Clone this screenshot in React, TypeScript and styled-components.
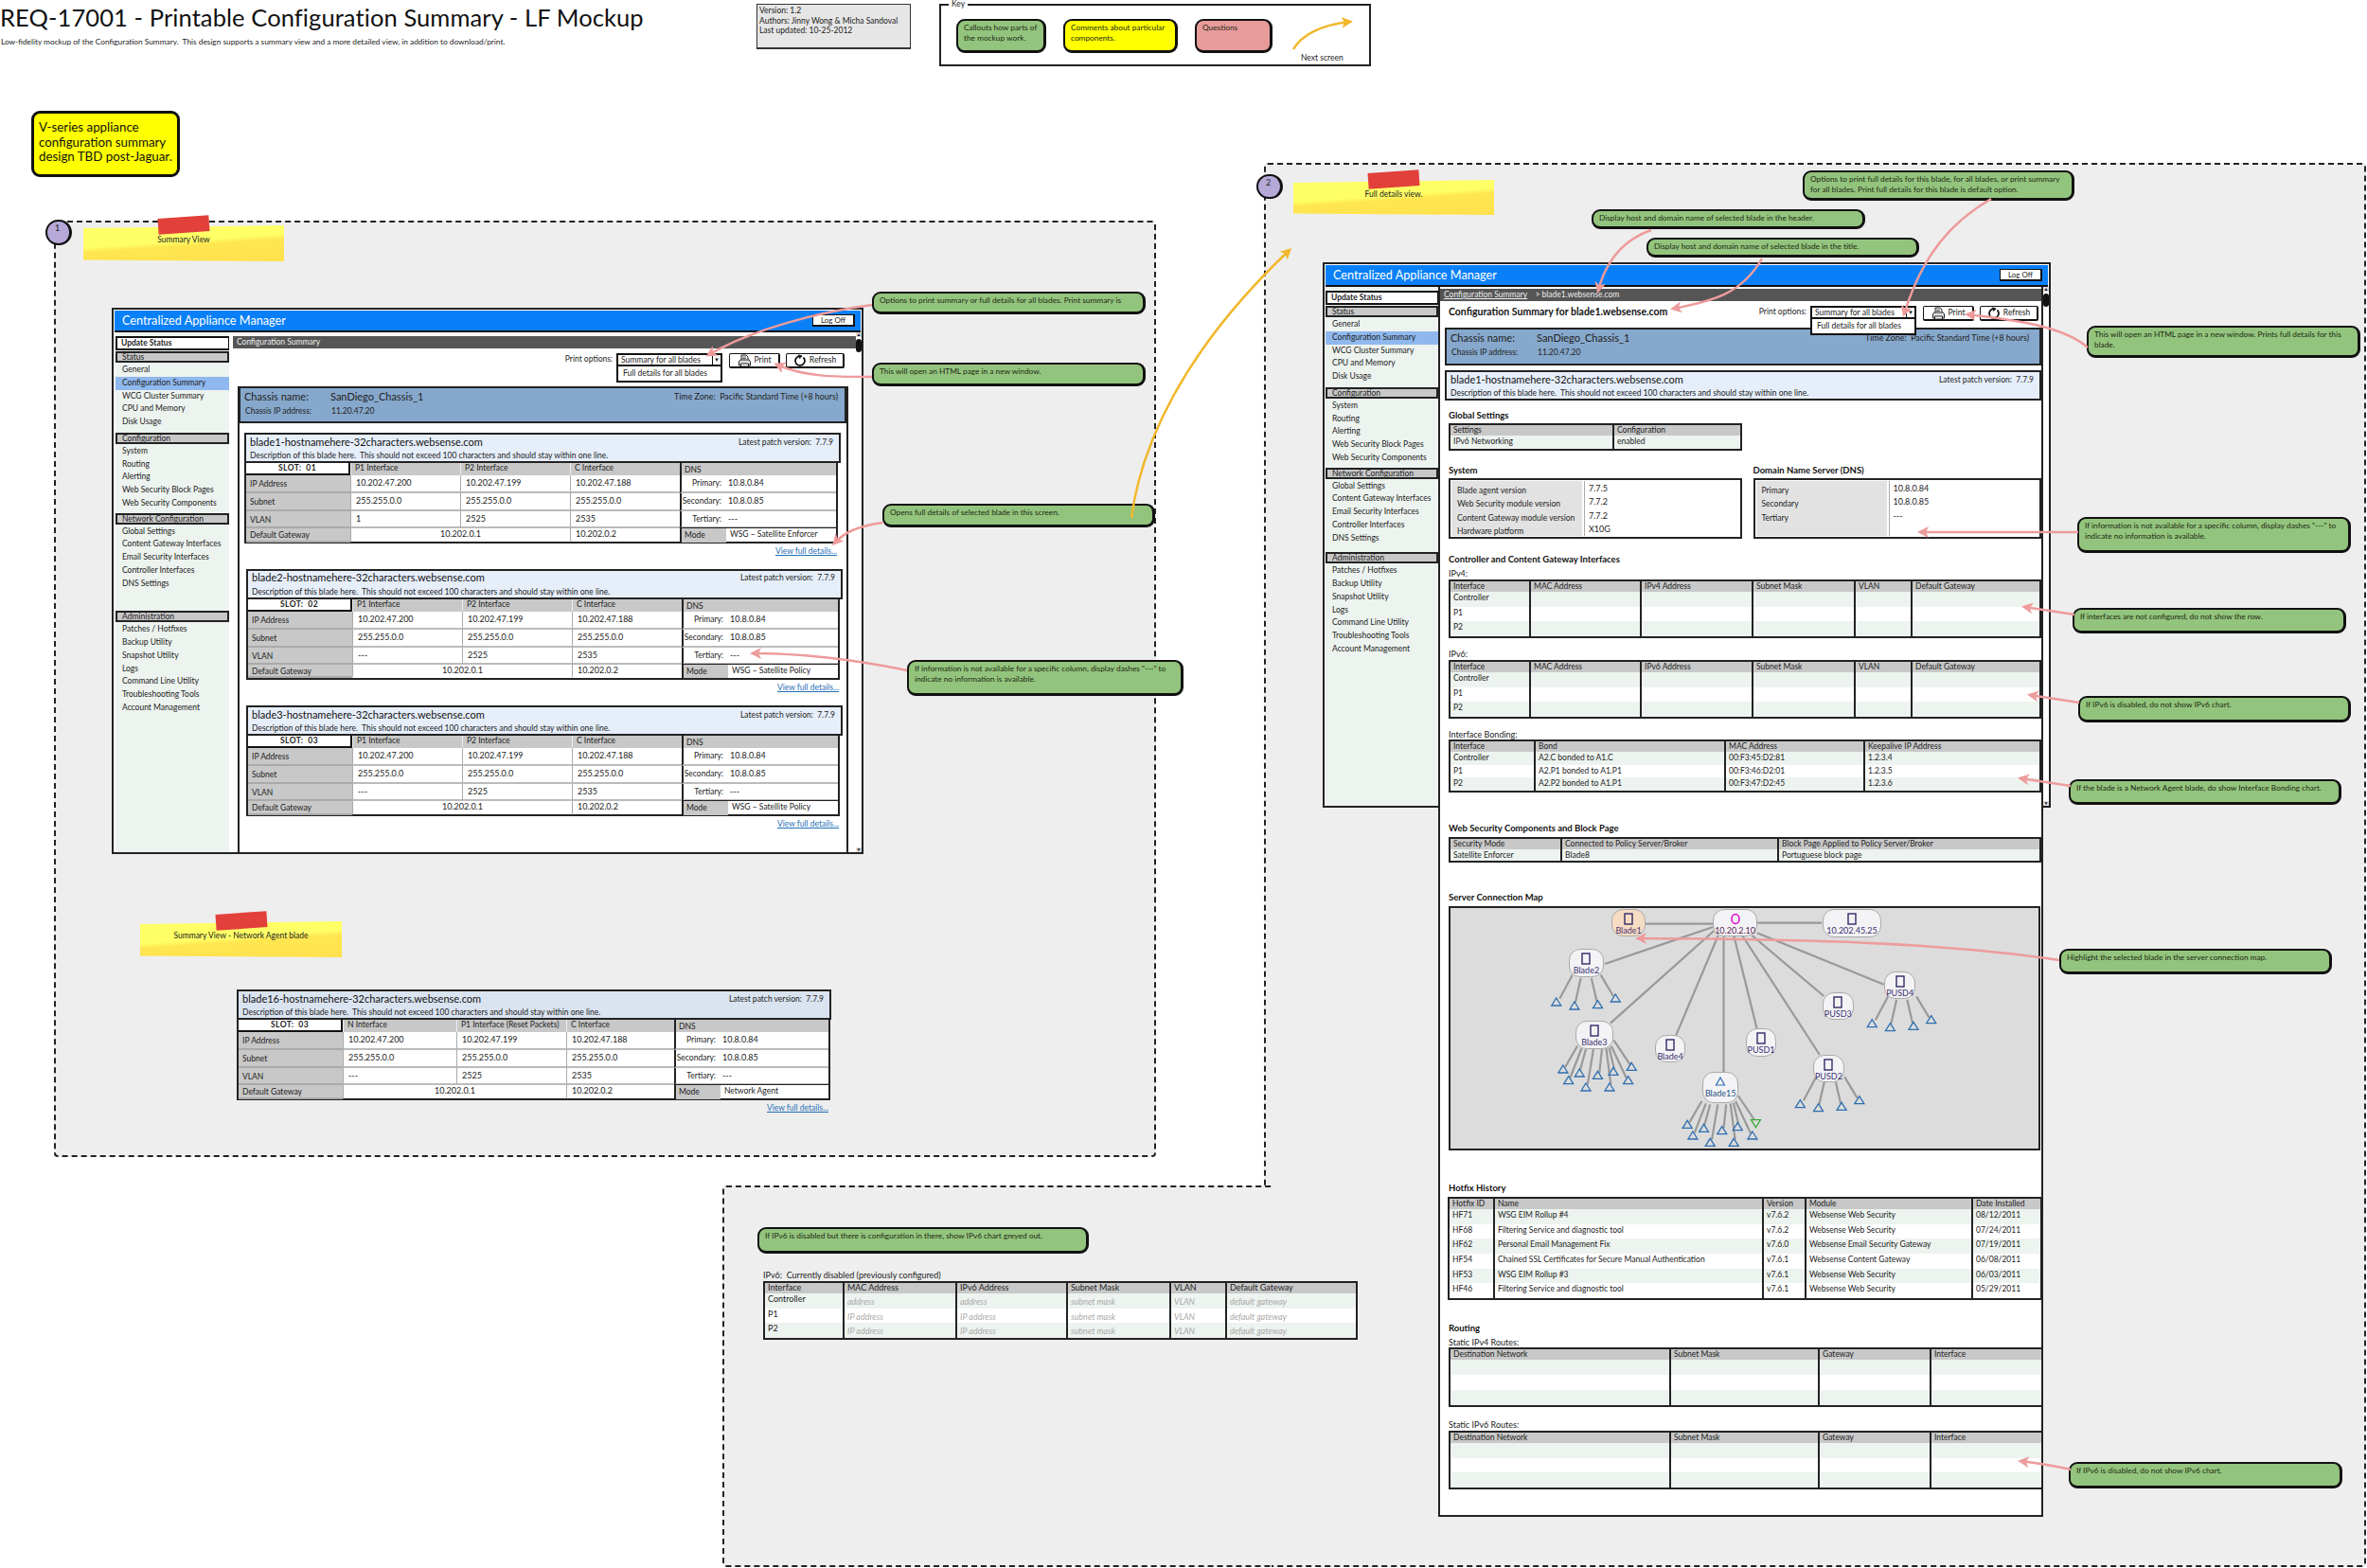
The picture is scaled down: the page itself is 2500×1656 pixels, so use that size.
import { Fragment } from 'react';
import styled, { createGlobalStyle, css } from 'styled-components';

const GlobalStyle = createGlobalStyle`
  html, body { margin: 0; padding: 0; background: #fff; }
  body {
    font-family: Lato, "Noto Sans", sans-serif;
    font-size: 8.5px;
    line-height: 10.5px;
    color: #222;
  }
  * { box-sizing: border-box; }
`;

interface PlaceProps { $x: number; $y: number; $w?: number; $h?: number }

const place = css<PlaceProps>`
  position: absolute;
  left: ${(p) => p.$x}px;
  top: ${(p) => p.$y}px;
  ${(p) => (p.$w ? `width: ${p.$w}px;` : '')}
  ${(p) => (p.$h ? `height: ${p.$h}px;` : '')}
`;

const Canvas = styled.div`
  position: relative;
  width: 2500px;
  height: 1656px;
  overflow: hidden;
  background: #fff;
`;

const PageTitle = styled.h1<PlaceProps>`
  ${place}
  margin: 0;
  font-size: 25.5px;
  letter-spacing: 0.09px;
  line-height: 30px;
  font-weight: 400;
  white-space: nowrap;
  color: #111;
`;

const PageSubtitle = styled.p<PlaceProps>`
  ${place}
  margin: 0;
  white-space: nowrap;
  font-size: 8.3px;
`;

const VersionBox = styled.div<PlaceProps>`
  ${place}
  background: #e6e6e6;
  border: 1.5px solid #333;
  border-bottom-width: 2px;
  padding: 1px 2px;
  font-size: 8.5px;
`;

const KeyBox = styled.div<PlaceProps>`
  ${place}
  border: 2px solid #222;
  background: #fff;
  display: flex;
  gap: 18px;
  padding: 14px 16px;
`;

const KeyLegend = styled.span`
  position: absolute;
  left: 8px;
  top: -7px;
  padding: 0 3px;
  background: #fff;
`;

const KeyArrow = styled.div`
  position: relative;
  flex: 1;
  margin-top: -2px;
  svg { display: block; }
  span { position: absolute; left: 12px; top: 38px; white-space: nowrap; }
`;

type Tone = 'green' | 'yellow' | 'pink';
const toneColor: Record<Tone, string> = { green: '#93c47d', yellow: '#ffff00', pink: '#e89b9b' };

const Note = styled.div<{ $tone?: Tone; $nw?: number; $nh?: number }>`
  background: ${(p) => toneColor[p.$tone ?? 'green']};
  border: 2px solid #111;
  border-right-width: 3px;
  border-bottom-width: 3px;
  border-radius: 9px;
  padding: 2px 4px 2px 6px;
  flex: none;
  color: #1c2a12;
  font-size: 8.3px;
  ${(p) => (p.$nw ? `width: ${p.$nw}px;` : '')}
  ${(p) => (p.$nh ? `height: ${p.$nh}px;` : '')}
`;

const Callout = styled(Note)<PlaceProps>`
  ${place}
`;

const BigNote = styled(Note)<PlaceProps>`
  ${place}
  font-size: 13.3px;
  line-height: 15.5px;
  padding: 7px 1px 7px 5px;
  border-width: 3px;
  color: #111;
`;

const Group = styled.div<PlaceProps & { $open?: boolean }>`
  ${place}
  background: #eee;
  border: 2px dashed #222;
  border-radius: 4px;
  ${(p) => (p.$open ? 'border-right: none; border-radius: 4px 0 0 4px;' : '')}
`;

const Badge = styled.div<PlaceProps>`
  ${place}
  background: #b6a9d8;
  border: 2px solid #111;
  border-right-width: 3px;
  border-radius: 14px;
  padding: 2px 0 0 8px;
  font-size: 9px;
`;

const Sticky = styled.div<PlaceProps>`
  ${place}
  padding-top: 10px;
  text-align: center;
  &::before {
    content: '';
    position: absolute;
    inset: 0;
    z-index: 0;
    background: linear-gradient(176deg, #ffff66 0 45%, #ffe650 55%, #ffe14d 100%);
    clip-path: polygon(0 8%, 100% 0, 100% 100%, 0 96%);
  }
  &::after {
    content: '';
    position: absolute;
    left: 50%;
    top: -9px;
    width: 54px;
    height: 17px;
    margin-left: -27px;
    background: #e2403a;
    transform: rotate(-4deg);
  }
  span { position: relative; z-index: 1; }
`;

const Window = styled.div<PlaceProps>`
  ${place}
  border: 2px solid #222;
  display: flex;
  flex-direction: column;
  background: #fff;
`;

const WindowHeader = styled.header`
  flex: none;
  height: 23px;
  margin: 1px 1px 0;
  background: #0a80f8;
  border-bottom: 2px solid #111;
  display: flex;
  align-items: center;
  justify-content: space-between;
  padding: 0 6px 0 8px;
  color: #fff;
  font-size: 12.7px;
`;

const LogOff = styled.div`
  width: 45px;
  height: 13px;
  background: #fff;
  color: #222;
  border: 1px solid #111;
  border-right-width: 2px;
  border-bottom-width: 2px;
  font-size: 8px;
  line-height: 10px;
  text-align: center;
`;

const WindowBody = styled.div`
  flex: 1;
  min-height: 0;
  display: flex;
`;

const Sidebar = styled.nav<{ $w: number; $ml: number }>`
  flex: none;
  width: ${(p) => p.$w}px;
  margin-left: ${(p) => p.$ml}px;
  padding-top: 4px;
  background: #edf3ef;
`;

const UpdateStatus = styled.div`
  height: 15px;
  background: #fff;
  border: 2px solid #111;
  border-right-width: 1px;
  padding-left: 4px;
  font-weight: 700;
  line-height: 11px;
`;

const SideHead = styled.div<{ $gap: number }>`
  height: 12px;
  margin: ${(p) => p.$gap}px 0 1px;
  background: #c8c8c8;
  border: 2px solid #222;
  padding-left: 5px;
  line-height: 8px;
`;

const SideItem = styled.div<{ $active?: boolean }>`
  height: 13.75px;
  line-height: 13.75px;
  padding-left: 7px;
  white-space: nowrap;
  ${(p) => (p.$active ? 'background: #8fb8ee;' : '')}
`;

const ScrollTrack = styled.div`
  flex: none;
  width: 6px;
  display: flex;
  flex-direction: column;
  justify-content: space-between;
  background: #fff;
`;

const ScrollButton = styled.div`
  height: 5px;
  font-size: 5px;
  line-height: 5px;
  text-align: center;
  color: #111;
  background: #ddd;
`;

const ScrollThumb = styled.div`
  width: 6px;
  height: 14px;
  margin-top: 2px;
  border-radius: 3px;
  background: #111;
`;

const ScrollTop = styled.div``;

const SummaryMain = styled.main`
  flex: none;
  width: 662px;
  display: flex;
  flex-direction: column;
`;

const DetailMain = styled.main`
  flex: none;
  width: 639px;
  height: 1299px;
  position: relative;
  z-index: 1;
  background: #fff;
  border: 2px solid #222;
  border-top: none;
`;

const TitleBar = styled.div<{ $ml: number; $mt: number }>`
  height: 13px;
  margin: ${(p) => p.$mt}px 0 0 ${(p) => p.$ml}px;
  padding-left: 4px;
  background: #555;
  color: #eee;
  line-height: 12px;
  white-space: nowrap;
  u { margin-right: 6px; }
`;

const Toolbar = styled.div<{ $h: number; $pr: number }>`
  height: ${(p) => p.$h}px;
  padding: 5px ${(p) => p.$pr}px 0 9px;
  display: flex;
  align-items: flex-start;
  justify-content: flex-end;
  white-space: nowrap;
`;

const PageHeading = styled.h2`
  flex: 1;
  margin: 0;
  font-size: 10.5px;
  line-height: 12px;
  font-weight: 700;
  color: #111;
`;

const PrintLabel = styled.span`
  margin: 1px 4px 0 0;
`;

const Combo = styled.div`
  position: relative;
  width: 112px;
  height: 14px;
  margin-right: 1px;
  background: #fff;
  border: 2px solid #111;
  padding-left: 3px;
  line-height: 10px;
  display: flex;
  justify-content: space-between;
`;

const ComboArrow = styled.span`
  width: 9px;
  border-left: 1px solid #111;
  font-size: 6px;
  text-align: center;
`;

const ComboList = styled.div`
  position: absolute;
  z-index: 2;
  left: -2px;
  right: -2px;
  top: 10px;
  height: 19px;
  padding: 2px 5px;
  background: #fff;
  border: 2px solid #111;
`;

const ToolButton = styled.div<{ $w: number }>`
  width: ${(p) => p.$w}px;
  height: 16px;
  margin-left: 6px;
  background: #fff;
  border: 1.5px solid #111;
  border-right-width: 2.5px;
  border-bottom-width: 2.5px;
  border-radius: 2px;
  display: flex;
  align-items: center;
  justify-content: center;
  gap: 3px;
`;

const SummaryPanel = styled.div`
  flex: 1;
  width: 645px;
  margin-left: 9px;
  border: solid #222;
  border-width: 0 2px;
`;

const ChassisBar = styled.div<{ $h: number; $ml: number; $pr: number }>`
  height: ${(p) => p.$h}px;
  margin-left: ${(p) => p.$ml}px;
  background: #86a8cc;
  border: 2px solid #222;
  display: grid;
  grid-template-columns: 91px 1fr auto;
  grid-template-rows: 16px 14px;
  padding: 1px ${(p) => p.$pr}px 0 4px;
  align-items: center;
  white-space: nowrap;
  font-size: 8.9px;
`;

const ChassisBig = styled.span`
  font-size: 11px;
`;

const ChassisSmall = styled.span`
  font-size: 8.5px;
  padding-left: 1px;
`;

const BladeBlock = styled.section<{ $ml: number; $mt: number }>`
  width: 630px;
  margin: ${(p) => p.$mt}px 0 0 ${(p) => p.$ml}px;
`;

const FreeBlade = styled.section<PlaceProps>`
  ${place}
`;

const BladeHead = styled.div<{ $bg?: string; $mt?: number; $ml?: number }>`
  height: 32px;
  margin: ${(p) => p.$mt ?? 0}px 0 0 ${(p) => p.$ml ?? 0}px;
  background: ${(p) => p.$bg ?? '#e6eefa'};
  border: 2px solid #222;
  padding: 1px 6px 0 4px;
`;

const BladeHeadTop = styled.div`
  display: flex;
  justify-content: space-between;
  align-items: center;
  height: 14px;
  margin-bottom: 2px;
  font-size: 8.5px;
  strong { font-size: 11px; font-weight: 400; color: #111; }
`;

const BladeGrid = styled.div<{ $cols: string }>`
  height: 85px;
  width: 627px;
  background: #fff;
  border: 2px solid #222;
  border-top: none;
  display: grid;
  grid-template-columns: ${(p) => p.$cols};
  grid-template-rows: 13px 19px 19px 18px 1fr;
`;

const SlotCell = styled.div`
  background: #fff;
  border: solid #111;
  border-width: 0 2px 2px 0;
  text-align: center;
  font-weight: 700;
  letter-spacing: 0.4px;
  line-height: 11px;
`;

const BladeHeadCell = styled.div`
  background: #c8c8c8;
  padding-left: 4px;
  white-space: nowrap;
  border-left: 1px solid #eee;
`;

const RowLabel = styled.div<{ $last?: boolean }>`
  background: #c8c8c8;
  border-bottom: 2px solid #aaa;
  padding: ${(p) => (p.$last ? 2 : 4)}px 0 0 4px;
`;

const RowValue = styled.div<{ $span?: number; $center?: boolean; $last?: boolean }>`
  padding: ${(p) => (p.$last ? 1 : 3)}px 0 0 5px;
  border-bottom: 2px solid ${(p) => (p.$last ? 'transparent' : '#bbb')};
  border-left: 1px solid #aaa;
  font-size: 9px;
  ${(p) => (p.$span ? `grid-column: span ${p.$span};` : '')}
  ${(p) => (p.$center ? 'text-align: center; padding-left: 0;' : '')}
`;

const DnsHead = styled.div`
  background: #c8c8c8;
  border-left: 2px solid #222;
  padding: 2px 0 0 3px;
`;

const DnsRow = styled.div`
  display: grid;
  grid-template-columns: 42px 1fr;
  column-gap: 7px;
  padding-top: 3px;
  border-left: 2px solid #222;
  border-bottom: 2px solid #bbb;
  span:first-child { text-align: right; }
  span:last-child { font-size: 9px; }
`;

const ModeRow = styled.div`
  display: flex;
  border-left: 2px solid #222;
  border-top: 1px solid #222;
  margin-top: -1px;
  b { width: 47px; background: #c8c8c8; font-weight: 400; padding: 2px 0 0 3px; }
  span { padding: 1px 0 0 4px; }
`;

const DetailsLink = styled.a<{ $w: number }>`
  display: block;
  width: ${(p) => p.$w}px;
  margin-top: 3px;
  text-align: right;
  color: #1f6fb5;
  text-decoration: underline;
`;

const SectionTitle = styled.h3<{ $mt: number; $ml?: number }>`
  margin: ${(p) => p.$mt}px 0 0 ${(p) => p.$ml ?? 9}px;
  height: 14px;
  font-size: 9.5px;
  line-height: 17px;
  font-weight: 700;
  color: #111;
`;

const TableLabel = styled.div<{ $mt: number }>`
  margin: ${(p) => p.$mt}px 0 0 9px;
  height: 12px;
  font-size: 9px;
  line-height: 14px;
`;

const TableGrid = styled.div<{ $cols: string; $w: number; $h: number; $mt: number; $ml?: number }>`
  width: ${(p) => p.$w}px;
  height: ${(p) => p.$h}px;
  margin: ${(p) => p.$mt}px 0 0 ${(p) => p.$ml ?? 9}px;
  border: 2px solid #222;
  background: #fff;
  display: grid;
  grid-template-columns: ${(p) => p.$cols};
  grid-template-rows: 11px;
  grid-auto-rows: 1fr;
`;

const FreeTableWrap = styled.div<PlaceProps>`
  ${place}
  font-size: 9px;
`;

const THead = styled.div<{ $first?: boolean }>`
  background: #c8c8c8;
  padding-left: 3px;
  white-space: nowrap;
  line-height: 10px;
  ${(p) => (p.$first ? '' : 'border-left: 2px solid #222;')}
`;

const TCell = styled.div<{ $first?: boolean; $odd?: boolean; $muted?: boolean }>`
  background: ${(p) => (p.$odd ? '#fff' : '#edf3ef')};
  padding: 1px 0 0 3px;
  white-space: nowrap;
  ${(p) => (p.$first ? '' : 'border-left: 2px solid #222;')}
  ${(p) => (p.$muted ? 'color: #aaa; font-style: italic; padding-top: 4px;' : '')}
`;

const InfoRow = styled.div`
  display: flex;
  margin-left: 9px;
  gap: 12px;
`;

const InfoColumn = styled.div<{ $w: number }>`
  width: ${(p) => p.$w}px;
  h3 { margin: 13px 0 2px; height: 14px; font-size: 9.5px; line-height: 15px; font-weight: 700; color: #111; }
`;

const InfoBox = styled.div`
  height: 64px;
  display: flex;
  border: 2px solid #222;
  padding: 1px;
  background: #fff;
`;

const InfoLabels = styled.div`
  width: 138px;
  height: 58px;
  margin-right: 2px;
  background: #e2e2e2;
  padding: 3px 0 0 6px;
  div { height: 14.3px; line-height: 14.3px; }
`;

const InfoValues = styled.div`
  border-left: 1px solid #aaa;
  padding: 1px 0 0 4px;
  height: 58px;
  font-size: 9px;
  div { height: 14.3px; line-height: 14.3px; }
`;

const MapBox = styled.div`
  position: relative;
  width: 625px;
  height: 258px;
  margin: 4px 0 0 9px;
  background: #dcdcdc;
  border: 2px solid #222;
`;

const MapLines = styled.svg`
  position: absolute;
  inset: 0;
`;

const NodeIcon = styled.svg`
  flex: none;
`;

const MapNode = styled.div<PlaceProps & { $on?: boolean; $ink: string }>`
  ${place}
  z-index: 1;
  display: flex;
  flex-direction: column;
  align-items: center;
  padding-top: 3px;
  background: ${(p) => (p.$on ? '#f7dcc4' : '#f3f3f6')};
  border: 1.5px solid #aaa;
  border-radius: 12px;
  color: ${(p) => p.$ink};
  font-size: 9px;
  line-height: 11px;
  white-space: nowrap;
`;

const ArrowLayer = styled.svg`
  position: absolute;
  inset: 0;
  z-index: 5;
  pointer-events: none;
`;

const sideSections = [
  { title: 'Status', gap: 1, items: ['General', 'Configuration Summary', 'WCG Cluster Summary', 'CPU and Memory', 'Disk Usage'] },
  { title: 'Configuration', gap: 4, items: ['System', 'Routing', 'Alerting', 'Web Security Block Pages', 'Web Security Components'] },
  { title: 'Network Configuration', gap: 3, items: ['Global Settings', 'Content Gateway Interfaces', 'Email Security Interfaces', 'Controller Interfaces', 'DNS Settings'] },
  { title: 'Administration', gap: 0, items: ['Patches / Hotfixes', 'Backup Utility', 'Snapshot Utility', 'Logs', 'Command Line Utility', 'Troubleshooting Tools', 'Account Management'] },
];

const SideNav = ({ width, left, adminGap }: { width: number; left: number; adminGap: number }) => (
  <Sidebar $w={width} $ml={left}>
    <UpdateStatus>Update Status</UpdateStatus>
    {sideSections.map((s) => (
      <Fragment key={s.title}>
        <SideHead $gap={s.title === 'Administration' ? adminGap : s.gap}>{s.title}</SideHead>
        {s.items.map((item) => (
          <SideItem key={item} $active={item === 'Configuration Summary'}>{item}</SideItem>
        ))}
      </Fragment>
    ))}
  </Sidebar>
);

const ScrollBar = () => (
  <ScrollTrack>
    <ScrollTop>
      <ScrollButton>▲</ScrollButton>
      <ScrollThumb />
    </ScrollTop>
    <ScrollButton>▼</ScrollButton>
  </ScrollTrack>
);

const PrinterIcon = () => (
  <svg width="15" height="14" viewBox="0 0 15 14" fill="none" stroke="#222" strokeWidth="1">
    <path d="M4 6V1h5l2 2v3" fill="#fff" />
    <path d="M1.5 12V7.5L3 6h9l1.5 1.5V12z" fill="#ddd" />
    <path d="M3.5 10h8v3h-8z" fill="#fff" />
    <path d="M5 3h4M5 4.5h4" strokeWidth="0.7" />
  </svg>
);

const RefreshIcon = () => (
  <svg width="14" height="14" viewBox="0 0 14 14" fill="none" stroke="#111" strokeWidth="1.8">
    <path d="M8.5 2.2A5 5 0 1 0 12 7a5 5 0 0 0-1.5-3.5" />
    <path d="M5.5 0.8l3.6 1.4-2.6 2.6z" fill="#111" strokeWidth="0.6" />
  </svg>
);

const PrintControls = () => (
  <>
    <PrintLabel>Print options:</PrintLabel>
    <Combo>
      Summary for all blades
      <ComboArrow>▼</ComboArrow>
      <ComboList>Full details for all blades</ComboList>
    </Combo>
    <ToolButton $w={54}><PrinterIcon />Print</ToolButton>
    <ToolButton $w={62}><RefreshIcon />Refresh</ToolButton>
  </>
);

const Chassis = ({ height, left, right }: { height: number; left: number; right: number }) => (
  <ChassisBar $h={height} $ml={left} $pr={right}>
    <ChassisBig>Chassis name:</ChassisBig>
    <ChassisBig>SanDiego_Chassis_1</ChassisBig>
    <span>Time Zone:&nbsp;&nbsp;Pacific Standard Time (+8 hours)</span>
    <ChassisSmall>Chassis IP address:</ChassisSmall>
    <ChassisSmall>11.20.47.20</ChassisSmall>
  </ChassisBar>
);

const BladeHeading = ({ name, bg, top, left }: { name: string; bg?: string; top?: number; left?: number }) => (
  <BladeHead $bg={bg} $mt={top} $ml={left}>
    <BladeHeadTop>
      <strong>{name}-hostnamehere-32characters.websense.com</strong>
      <span>Latest patch version:&nbsp;&nbsp;7.7.9</span>
    </BladeHeadTop>
    <div>Description of this blade here.&nbsp; This should not exceed 100 characters and should stay within one line.</div>
  </BladeHead>
);

interface BladeTableProps {
  slot: string;
  vlan: string;
  mode: string;
  heads: string[];
  cols: string;
}

const BladeTable = ({ slot, vlan, mode, heads, cols }: BladeTableProps) => (
  <BladeGrid $cols={cols}>
    <SlotCell>SLOT:&nbsp;&nbsp;{slot}</SlotCell>
    {heads.map((h) => <BladeHeadCell key={h}>{h}</BladeHeadCell>)}
    <DnsHead>DNS</DnsHead>

    <RowLabel>IP Address</RowLabel>
    <RowValue>10.202.47.200</RowValue>
    <RowValue>10.202.47.199</RowValue>
    <RowValue>10.202.47.188</RowValue>
    <DnsRow><span>Primary:</span><span>10.8.0.84</span></DnsRow>

    <RowLabel>Subnet</RowLabel>
    <RowValue>255.255.0.0</RowValue>
    <RowValue>255.255.0.0</RowValue>
    <RowValue>255.255.0.0</RowValue>
    <DnsRow><span>Secondary:</span><span>10.8.0.85</span></DnsRow>

    <RowLabel>VLAN</RowLabel>
    <RowValue>{vlan}</RowValue>
    <RowValue>2525</RowValue>
    <RowValue>2535</RowValue>
    <DnsRow><span>Tertiary:</span><span>---</span></DnsRow>

    <RowLabel $last>Default Gateway</RowLabel>
    <RowValue $span={2} $center $last>10.202.0.1</RowValue>
    <RowValue $last>10.202.0.2</RowValue>
    <ModeRow><b>Mode</b><span>{mode}</span></ModeRow>
  </BladeGrid>
);

const interfaceHeads = ['P1 Interface', 'P2 Interface', 'C Interface'];
const bladeCols = '110px 116px 116px 116px 1fr';

const blades = [
  { name: 'blade1', slot: '01', vlan: '1', mode: 'WSG – Satellite Enforcer', ml: 5, mt: 10, w: 626 },
  { name: 'blade2', slot: '02', vlan: '---', mode: 'WSG – Satellite Policy', ml: 7, mt: 13, w: 626 },
  { name: 'blade3', slot: '03', vlan: '---', mode: 'WSG – Satellite Policy', ml: 7, mt: 14, w: 626 },
];

interface TableProps {
  cols: string;
  w: number;
  h: number;
  mt: number;
  ml?: number;
  heads: string[];
  rows: string[][];
  muted?: boolean;
}

const DataTable = ({ cols, w, h, mt, ml, heads, rows, muted }: TableProps) => (
  <TableGrid $cols={cols} $w={w} $h={h} $mt={mt} $ml={ml}>
    {heads.map((head, i) => <THead key={head} $first={i === 0}>{head}</THead>)}
    {rows.map((row, r) =>
      row.map((cell, c) => (
        <TCell key={`${r}-${c}`} $first={c === 0} $odd={r % 2 === 1} $muted={muted && c > 0}>
          {cell}
        </TCell>
      ))
    )}
  </TableGrid>
);

const emptyRow = (first: string) => [first, '', '', '', '', ''];
const ifaceCols = '83px 117px 118px 108px 60px 1fr';
const routeCols = '231px 157px 118px 1fr';
const emptyRoutes = [['', '', '', ''], ['', '', '', ''], ['', '', '', '']];

// map coordinates were read from a crop, so convert them to the box's own pixels
const mx = (z: number) => z / 2.24 - 32;
const my = (z: number) => z / 3 - 31;

const mapNodes = [
  { label: 'Blade1', x: 453, y: 97, w: 80, h: 86, ink: '#4a3570', glyph: 'rect', on: true },
  { label: '10.20.2.10', x: 693, y: 97, w: 104, h: 86, ink: '#5e1f55', glyph: 'hub' },
  { label: '10.202.45.25', x: 953, y: 97, w: 137, h: 88, ink: '#3b3070', glyph: 'rect' },
  { label: 'Blade2', x: 352, y: 223, w: 82, h: 90, ink: '#3b3070', glyph: 'rect' },
  { label: 'Blade3', x: 367, y: 450, w: 90, h: 90, ink: '#3b3070', glyph: 'rect' },
  { label: 'Blade4', x: 555, y: 495, w: 73, h: 88, ink: '#3b3070', glyph: 'rect' },
  { label: 'PUSD1', x: 770, y: 475, w: 73, h: 88, ink: '#3b3070', glyph: 'rect' },
  { label: 'Blade15', x: 668, y: 613, w: 85, h: 97, ink: '#24507e', glyph: 'tri' },
  { label: 'PUSD2', x: 930, y: 557, w: 73, h: 88, ink: '#3b3070', glyph: 'rect' },
  { label: 'PUSD3', x: 952, y: 360, w: 73, h: 88, ink: '#3b3070', glyph: 'rect' },
  { label: 'PUSD4', x: 1098, y: 293, w: 74, h: 87, ink: '#3b3070', glyph: 'rect' },
];

const hubLines = [
  [533, 143, 693, 143], [797, 140, 950, 140], [693, 153, 437, 270], [695, 165, 450, 458],
  [705, 180, 605, 497], [718, 180, 718, 613], [742, 180, 797, 478], [762, 180, 945, 558],
  [785, 180, 955, 372], [797, 172, 1097, 335],
];

const fan4 = [
  [360, 305, 330, 380, 322, 393], [380, 315, 367, 392, 365, 405],
  [405, 315, 418, 390, 420, 401], [427, 305, 457, 372, 462, 381],
];
const fan9 = [
  [372, 530, 343, 597, 338, 606], [382, 537, 355, 630, 351, 641], [392, 540, 378, 608, 377, 618],
  [410, 540, 396, 652, 392, 663], [430, 540, 424, 615, 420, 625], [440, 537, 451, 652, 448, 663],
  [447, 535, 459, 603, 457, 613], [452, 530, 488, 632, 492, 641], [458, 512, 497, 590, 500, 598],
];

const fans = [
  { dx: 0, dy: 0, fan: fan4 },
  { dx: 577, dy: 323, fan: fan4 },
  { dx: 747, dy: 68, fan: fan4 },
  { dx: 0, dy: 0, fan: fan9 },
  { dx: 294, dy: 175, fan: fan9, green: 500 },
];

const triangle = (x: number, y: number, flip = false) => {
  const s = flip ? -1 : 1;
  return `${x},${y - 5 * s} ${x + 5},${y + 3 * s} ${x - 5},${y + 3 * s}`;
};

const NodeGlyph = ({ kind }: { kind: string }) => (
  <NodeIcon width="12" height="13" viewBox="0 0 12 13" fill="none">
    {kind === 'rect' && <rect x="2" y="1" width="8" height="11" stroke="#2f2a66" strokeWidth="1.4" />}
    {kind === 'hub' && <ellipse cx="6" cy="6.5" rx="4" ry="5" stroke="#e000d0" strokeWidth="1.5" />}
    {kind === 'tri' && <polygon points="6,2 10.5,10 1.5,10" stroke="#2e6fb0" strokeWidth="1.2" />}
  </NodeIcon>
);

const ConnectionMap = () => (
  <MapBox>
    <MapLines width="621" height="254">
      <g stroke="#999" strokeWidth="2.2">
        {hubLines.map(([a, b, c, d]) => (
          <line key={`${a}-${b}-${c}`} x1={mx(a)} y1={my(b)} x2={mx(c)} y2={my(d)} />
        ))}
        {fans.flatMap(({ dx, dy, fan }) =>
          fan.map(([a, b, c, d]) => (
            <line
              key={`${dx}-${a}-${c}`}
              x1={mx(a + dx)}
              y1={my(b + dy)}
              x2={mx(c + dx)}
              y2={my(d + dy)}
            />
          ))
        )}
      </g>
      <g fill="#dcdcdc" stroke="#2e6fb0" strokeWidth="1.3">
        {fans.flatMap(({ dx, dy, fan, green }) =>
          fan
            .filter(([, , , , e]) => e !== green)
            .map(([, , , , e, f]) => (
              <polygon key={`${dx}-${e}-${f}`} points={triangle(mx(e + dx), my(f + dy))} />
            ))
        )}
      </g>
      <polygon points={triangle(mx(794), my(773), true)} fill="#dcdcdc" stroke="#3caa3c" strokeWidth="1.3" />
    </MapLines>
    {mapNodes.map((n) => (
      <MapNode
        key={n.label}
        $x={mx(n.x)}
        $y={my(n.y)}
        $w={n.w / 2.24}
        $h={n.h / 3}
        $ink={n.ink}
        $on={n.on}
      >
        <NodeGlyph kind={n.glyph} />
        {n.label}
      </MapNode>
    ))}
  </MapBox>
);

const pinkArrows = [
  'M921,322 C860,330 790,350 748,375',
  'M921,398 C880,398 850,398 820,385',
  'M932,552 C905,556 892,562 881,574',
  'M958,708 C900,696 850,690 795,690',
  'M1744,243 C1710,255 1695,280 1688,307',
  'M1861,273 C1840,310 1810,318 1767,326',
  'M2103,210 C2060,235 2030,270 2011,332',
  'M2205,367 C2180,345 2130,338 2078,332',
  'M2195,562 L2028,562',
  'M2191,649 L2138,641',
  'M2196,742 L2144,734',
  'M2187,830 L2134,822',
  'M2175,1014 C2050,995 1900,992 1730,991',
  'M2187,1552 C2170,1548 2150,1545 2134,1543',
];

const arrowHead = (id: string, color: string) => (
  <marker id={id} markerUnits="userSpaceOnUse" markerWidth="12" markerHeight="12" refX="9" refY="6" orient="auto">
    <path d="M0,0 L12,6 L0,12 L3,6 z" fill={color} />
  </marker>
);

const callouts = [
  { x: 921, y: 308, w: 289, h: 24, text: 'Options to print summary or full details for all blades.  Print summary is' },
  { x: 921, y: 383, w: 289, h: 25, text: 'This will open an HTML page in a new window.' },
  { x: 932, y: 532, w: 288, h: 25, text: 'Opens full details of selected blade in this screen.' },
  { x: 958, y: 697, w: 292, h: 38, text: 'If information is not available for a specific column, display dashes "---" to indicate no information is available.' },
  { x: 1904, y: 180, w: 287, h: 32, text: 'Options to print full details for this blade, for all blades, or print summary for all blades.  Print full details for this blade is default option.' },
  { x: 1681, y: 221, w: 289, h: 21, text: 'Display host and domain name of selected blade in the header.' },
  { x: 1739, y: 251, w: 288, h: 21, text: 'Display host and domain name of selected blade in the title.' },
  { x: 2204, y: 344, w: 289, h: 34, text: 'This will open an HTML page in a new window.  Prints full details for this blade.' },
  { x: 2194, y: 546, w: 289, h: 38, text: 'If information is not available for a specific column, display dashes "---" to indicate no information is available.' },
  { x: 2189, y: 642, w: 289, h: 27, text: 'If interfaces are not configured, do not show the row.' },
  { x: 2195, y: 735, w: 288, h: 28, text: 'If IPv6 is disabled, do not show IPv6 chart.' },
  { x: 2185, y: 823, w: 288, h: 27, text: 'If the blade is a Network Agent blade, do show Interface Bonding chart.' },
  { x: 2175, y: 1002, w: 288, h: 27, text: 'Highlight the selected blade in the server connection map.' },
  { x: 2185, y: 1544, w: 289, h: 28, text: 'If IPv6 is disabled, do not show IPv6 chart.' },
  { x: 800, y: 1296, w: 350, h: 28, text: 'If IPv6 is disabled but there is configuration in there, show IPv6 chart greyed out.' },
];

const App = () => (
  <>
    <GlobalStyle />
    <Canvas>
      <PageTitle $x={0} $y={3}>REQ-17001 - Printable Configuration Summary - LF Mockup</PageTitle>
      <PageSubtitle $x={1} $y={39}>
        Low-fidelity mockup of the Configuration Summary.&nbsp; This design supports a summary view and a more detailed view, in addition to download/print.
      </PageSubtitle>

      <VersionBox $x={799} $y={4} $w={163} $h={48}>
        <div>Version: 1.2</div>
        <div>Authors: Jinny Wong &amp; Micha Sandoval</div>
        <div>Last updated: 10-25-2012</div>
      </VersionBox>

      <KeyBox $x={992} $y={4} $w={456} $h={66}>
        <KeyLegend>Key</KeyLegend>
        <Note $nw={95} $nh={36}>Callouts how parts of the mockup work.</Note>
        <Note $tone="yellow" $nw={121} $nh={36}>Comments about particular components.</Note>
        <Note $tone="pink" $nw={82} $nh={36}>Questions</Note>
        <KeyArrow>
          <svg width="70" height="36" fill="none">
            <defs>{arrowHead('key-head', '#f1b82d')}</defs>
            <path d="M4,34 C12,20 32,8 64,5" stroke="#f1b82d" strokeWidth="2.5" markerEnd="url(#key-head)" />
          </svg>
          <span>Next screen</span>
        </KeyArrow>
      </KeyBox>

      <BigNote $tone="yellow" $x={33} $y={117} $w={157} $h={70}>
        V-series appliance configuration summary design TBD post-Jaguar.
      </BigNote>

      <Group $x={57} $y={233} $w={1164} $h={989} />
      <Group $x={1335} $y={172} $w={1164} $h={1483} />
      <Group $x={763} $y={1252} $w={580} $h={403} $open />

      <Badge $x={48} $y={232} $w={28} $h={27}>1</Badge>
      <Sticky $x={88} $y={238} $w={212} $h={38}><span>Summary View</span></Sticky>
      <Badge $x={1327} $y={184} $w={28} $h={26}>2</Badge>
      <Sticky $x={1366} $y={190} $w={212} $h={37}><span>Full details view.</span></Sticky>
      <Sticky $x={148} $y={973} $w={213} $h={38}><span>Summary View - Network Agent blade</span></Sticky>

      <Window $x={118} $y={325} $w={794} $h={577}>
        <WindowHeader>Centralized Appliance Manager<LogOff>Log Off</LogOff></WindowHeader>
        <WindowBody>
          <SideNav width={120} left={2} adminGap={22} />
          <SummaryMain>
            <TitleBar $ml={4} $mt={4}>Configuration Summary</TitleBar>
            <Toolbar $h={40} $pr={12}><PrintControls /></Toolbar>
            <SummaryPanel>
              <Chassis height={39} left={-1} right={7} />
              {blades.map((b) => (
                <BladeBlock key={b.name} $ml={b.ml} $mt={b.mt}>
                  <BladeHeading name={b.name} />
                  <BladeTable slot={b.slot} vlan={b.vlan} mode={b.mode} heads={interfaceHeads} cols={bladeCols} />
                  <DetailsLink $w={b.w}>View full details...</DetailsLink>
                </BladeBlock>
              ))}
            </SummaryPanel>
          </SummaryMain>
          <ScrollBar />
        </WindowBody>
      </Window>

      <FreeBlade $x={250} $y={1045} $w={628}>
        <BladeHeading name="blade16" bg="#dae3f0" />
        <BladeTable
          slot="03"
          vlan="---"
          mode="Network Agent"
          heads={['N Interface', 'P1 Interface (Reset Packets)', 'C Interface']}
          cols="110px 120px 116px 114px 1fr"
        />
        <DetailsLink $w={625}>View full details...</DetailsLink>
      </FreeBlade>

      <Window $x={1397} $y={277} $w={769} $h={576}>
        <WindowHeader>Centralized Appliance Manager<LogOff>Log Off</LogOff></WindowHeader>
        <WindowBody>
          <SideNav width={119} left={1} adminGap={8} />
          <DetailMain>
            <TitleBar $ml={0} $mt={2}><u>Configuration Summary</u> &gt; blade1.websense.com</TitleBar>
            <Toolbar $h={28} $pr={3}>
              <PageHeading>Configuration Summary for blade1.websense.com</PageHeading>
              <PrintControls />
            </Toolbar>
            <Chassis height={40} left={5} right={11} />
            <BladeHeading name="blade1" top={5} left={5} />

            <SectionTitle $mt={7}>Global Settings</SectionTitle>
            <DataTable cols="171px 1fr" w={310} h={29} mt={3} heads={['Settings', 'Configuration']} rows={[['IPv6 Networking', 'enabled']]} />

            <InfoRow>
              <InfoColumn $w={310}>
                <h3>System</h3>
                <InfoBox>
                  <InfoLabels>
                    <div>Blade agent version</div>
                    <div>Web Security module version</div>
                    <div>Content Gateway module version</div>
                    <div>Hardware platform</div>
                  </InfoLabels>
                  <InfoValues>
                    <div>7.7.5</div>
                    <div>7.7.2</div>
                    <div>7.7.2</div>
                    <div>X10G</div>
                  </InfoValues>
                </InfoBox>
              </InfoColumn>
              <InfoColumn $w={305}>
                <h3>Domain Name Server (DNS)</h3>
                <InfoBox>
                  <InfoLabels>
                    <div>Primary</div>
                    <div>Secondary</div>
                    <div>Tertiary</div>
                  </InfoLabels>
                  <InfoValues>
                    <div>10.8.0.84</div>
                    <div>10.8.0.85</div>
                    <div>---</div>
                  </InfoValues>
                </InfoBox>
              </InfoColumn>
            </InfoRow>

            <SectionTitle $mt={13}>Controller and Content Gateway Interfaces</SectionTitle>
            <TableLabel $mt={3}>IPv4:</TableLabel>
            <DataTable
              cols={ifaceCols} w={626} h={62} mt={1}
              heads={['Interface', 'MAC Address', 'IPv4 Address', 'Subnet Mask', 'VLAN', 'Default Gateway']}
              rows={[emptyRow('Controller'), emptyRow('P1'), emptyRow('P2')]}
            />
            <TableLabel $mt={10}>IPv6:</TableLabel>
            <DataTable
              cols={ifaceCols} w={626} h={62} mt={1}
              heads={['Interface', 'MAC Address', 'IPv6 Address', 'Subnet Mask', 'VLAN', 'Default Gateway']}
              rows={[emptyRow('Controller'), emptyRow('P1'), emptyRow('P2')]}
            />
            <TableLabel $mt={10}>Interface Bonding:</TableLabel>
            <DataTable
              cols="88px 201px 147px 1fr" w={626} h={56} mt={0}
              heads={['Interface', 'Bond', 'MAC Address', 'Keepalive IP Address']}
              rows={[
                ['Controller', 'A2.C bonded to A1.C', '00:F3:45:D2:81', '1.2.3.4'],
                ['P1', 'A2.P1 bonded to A1.P1', '00:F3:46:D2:01', '1.2.3.5'],
                ['P2', 'A2.P2 bonded to A1.P1', '00:F3:47:D2:45', '1.2.3.6'],
              ]}
            />

            <SectionTitle $mt={29}>Web Security Components and Block Page</SectionTitle>
            <DataTable
              cols="116px 229px 1fr" w={626} h={27} mt={4}
              heads={['Security Mode', 'Connected to Policy Server/Broker', 'Block Page Applied to Policy Server/Broker']}
              rows={[['Satellite Enforcer', 'Blade8', 'Portuguese block page']]}
            />

            <SectionTitle $mt={28}>Server Connection Map</SectionTitle>
            <ConnectionMap />

            <SectionTitle $mt={31}>Hotfix History</SectionTitle>
            <DataTable
              cols="46px 284px 45px 176px 1fr" w={628} h={109} mt={4} ml={8}
              heads={['Hotfix ID', 'Name', 'Version', 'Module', 'Date Installed']}
              rows={[
                ['HF71', 'WSG EIM Rollup #4', 'v7.6.2', 'Websense Web Security', '08/12/2011'],
                ['HF68', 'Filtering Service and diagnostic tool', 'v7.6.2', 'Websense Web Security', '07/24/2011'],
                ['HF62', 'Personal Email Management Fix', 'v7.6.0', 'Websense Email Security Gateway', '07/19/2011'],
                ['HF54', 'Chained SSL Certificates for Secure Manual Authentication', 'v7.6.1', 'Websense Content Gateway', '06/08/2011'],
                ['HF53', 'WSG EIM Rollup #3', 'v7.6.1', 'Websense Web Security', '06/03/2011'],
                ['HF46', 'Filtering Service and diagnostic tool', 'v7.6.1', 'Websense Web Security', '05/29/2011'],
              ]}
            />

            <SectionTitle $mt={21}>Routing</SectionTitle>
            <TableLabel $mt={3}>Static IPv4 Routes:</TableLabel>
            <DataTable cols={routeCols} w={628} h={63} mt={0} heads={['Destination Network', 'Subnet Mask', 'Gateway', 'Interface']} rows={emptyRoutes} />
            <TableLabel $mt={12}>Static IPv6 Routes:</TableLabel>
            <DataTable cols={routeCols} w={628} h={62} mt={1} heads={['Destination Network', 'Subnet Mask', 'Gateway', 'Interface']} rows={emptyRoutes} />
          </DetailMain>
          <ScrollBar />
        </WindowBody>
      </Window>

      <FreeTableWrap $x={797} $y={1340} $w={640}>
        <TableLabel $mt={0}>IPv6:&nbsp; Currently disabled (previously configured)</TableLabel>
        <DataTable
          cols="82px 119px 117px 109px 59px 1fr" w={628} h={62} mt={1}
          heads={['Interface', 'MAC Address', 'IPv6 Address', 'Subnet Mask', 'VLAN', 'Default Gateway']}
          rows={[
            ['Controller', 'address', 'address', 'subnet mask', 'VLAN', 'default gateway'],
            ['P1', 'IP address', 'IP address', 'subnet mask', 'VLAN', 'default gateway'],
            ['P2', 'IP address', 'IP address', 'subnet mask', 'VLAN', 'default gateway'],
          ]}
          muted
        />
      </FreeTableWrap>

      {callouts.map((c) => (
        <Callout key={`${c.x}-${c.y}`} $x={c.x} $y={c.y} $w={c.w} $h={c.h}>{c.text}</Callout>
      ))}

      <ArrowLayer width="2500" height="1656" fill="none">
        <defs>
          {arrowHead('pink-head', '#ee9b9b')}
          {arrowHead('gold-head', '#f1b82d')}
        </defs>
        {pinkArrows.map((d) => (
          <path key={d} d={d} stroke="#ee9b9b" strokeWidth="2.5" markerEnd="url(#pink-head)" />
        ))}
        <path d="M1195,547 C1205,470 1250,370 1362,264" stroke="#f1b82d" strokeWidth="2.5" markerEnd="url(#gold-head)" />
      </ArrowLayer>
    </Canvas>
  </>
);

export default App;
